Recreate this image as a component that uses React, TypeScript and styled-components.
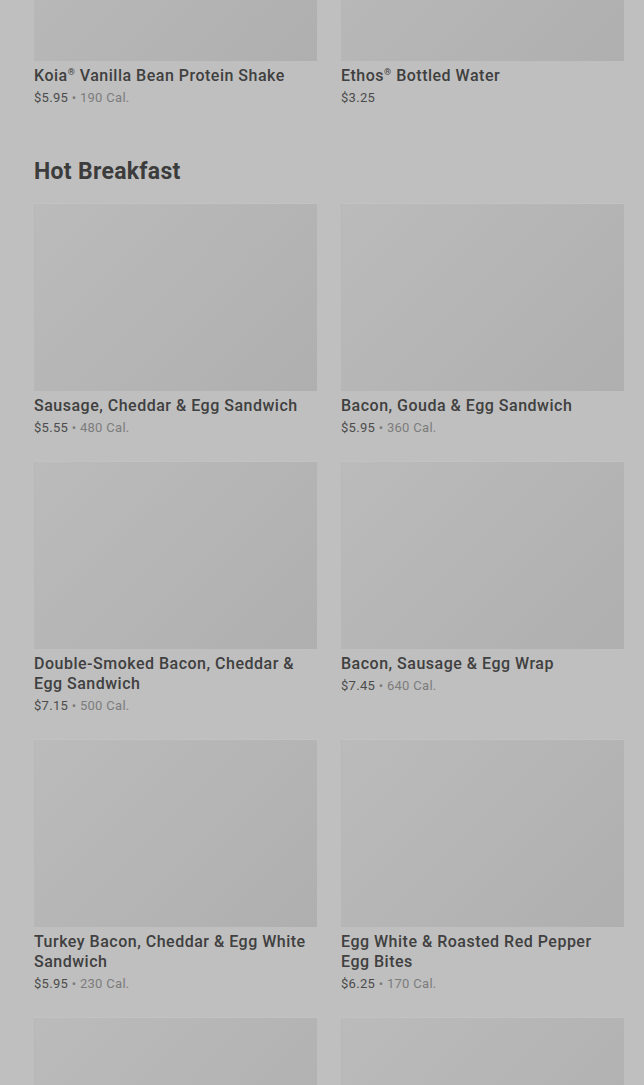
import React, { FC } from 'react';
import styled, { createGlobalStyle } from 'styled-components';

// Styles
const GlobalStyle = createGlobalStyle`
  html, body {
    margin: 0;
    padding: 0;
    background: #bfbfbf;
    overflow: hidden;
  }
  body {
    font-family: Roboto, "Liberation Sans", sans-serif;
    -webkit-font-smoothing: antialiased;
  }
`;

const Page = styled.div`
  width: 644px;
  height: 1085px;
  overflow: hidden;
  padding: 0 20px 0 34px;
  box-sizing: border-box;
`;

const Scroller = styled.div`
  margin-top: -127px;
`;

const Section = styled.section`
  & + & {
    margin-top: 50px;
  }
`;

const SectionTitle = styled.h2`
  margin: 0 0 16px;
  font-size: 23px;
  line-height: 30px;
  font-weight: 700;
  letter-spacing: 0.3px;
  color: #3c3c3c;
`;

const Grid = styled.ul`
  display: grid;
  grid-template-columns: repeat(2, 283px);
  column-gap: 24px;
  row-gap: 24px;
  margin: 0;
  padding: 0;
  list-style: none;
`;

const Card = styled.li`
  display: flex;
  flex-direction: column;
`;

const Poster = styled.div`
  height: 188px;
  background: linear-gradient(135deg, #bbbbbb 0%, #b5b5b5 50%, #afafaf 100%);
  box-shadow: inset 0 1px 0 #c2c2c2, inset 1px 0 0 #b7b7b7;
`;

const ItemName = styled.p`
  margin: 5px 0 0;
  font-size: 16px;
  line-height: 20px;
  font-weight: 500;
  letter-spacing: 0.5px;
  color: #404040;

  sup {
    font-size: 9px;
    line-height: 0;
    vertical-align: 6px;
  }
`;

const Meta = styled.p`
  margin: 3px 0 0;
  font-size: 13px;
  line-height: 18px;
  letter-spacing: 0.3px;
  color: #4c4c4c;
`;

const Calories = styled.span`
  color: #7c7c7c;
`;

// Types
type Item = {
  name?: string,
  price?: string,
  cal?: number,
};

type Group = {
  title?: string,
  items: Item[],
};

// Data
const groups: Group[] = [
  {
    items: [
      { name: 'Koia® Vanilla Bean Protein Shake', price: '$5.95', cal: 190 },
      { name: 'Ethos® Bottled Water', price: '$3.25' },
    ],
  },
  {
    title: 'Hot Breakfast',
    items: [
      { name: 'Sausage, Cheddar & Egg Sandwich', price: '$5.55', cal: 480 },
      { name: 'Bacon, Gouda & Egg Sandwich', price: '$5.95', cal: 360 },
      { name: 'Double-Smoked Bacon, Cheddar & Egg Sandwich', price: '$7.15', cal: 500 },
      { name: 'Bacon, Sausage & Egg Wrap', price: '$7.45', cal: 640 },
      { name: 'Turkey Bacon, Cheddar & Egg White Sandwich', price: '$5.95', cal: 230 },
      { name: 'Egg White & Roasted Red Pepper Egg Bites', price: '$6.25', cal: 170 },
      // still loading, below the fold
      {},
      {},
    ],
  },
];

// Utils
const renderName = (name: string) =>
  name.split('®').map((part, i, all) => (
    <React.Fragment key={i}>
      {part}
      {i < all.length - 1 && <sup>®</sup>}
    </React.Fragment>
  ));

// Components
const MenuItem: FC<{ item: Item }> = ({ item }) => (
  <Card>
    <Poster />
    {item.name && <ItemName>{renderName(item.name)}</ItemName>}
    {item.price && (
      <Meta>
        {item.price}
        {item.cal !== undefined && <Calories> • {item.cal} Cal.</Calories>}
      </Meta>
    )}
  </Card>
);

const App: FC = () => (
  <Page>
    <GlobalStyle />
    <Scroller>
      {groups.map((group, i) => (
        <Section key={i}>
          {group.title && <SectionTitle>{group.title}</SectionTitle>}
          <Grid>
            {group.items.map((item, j) => (
              <MenuItem key={item.name ?? `placeholder-${j}`} item={item} />
            ))}
          </Grid>
        </Section>
      ))}
    </Scroller>
  </Page>
);

export default App;
